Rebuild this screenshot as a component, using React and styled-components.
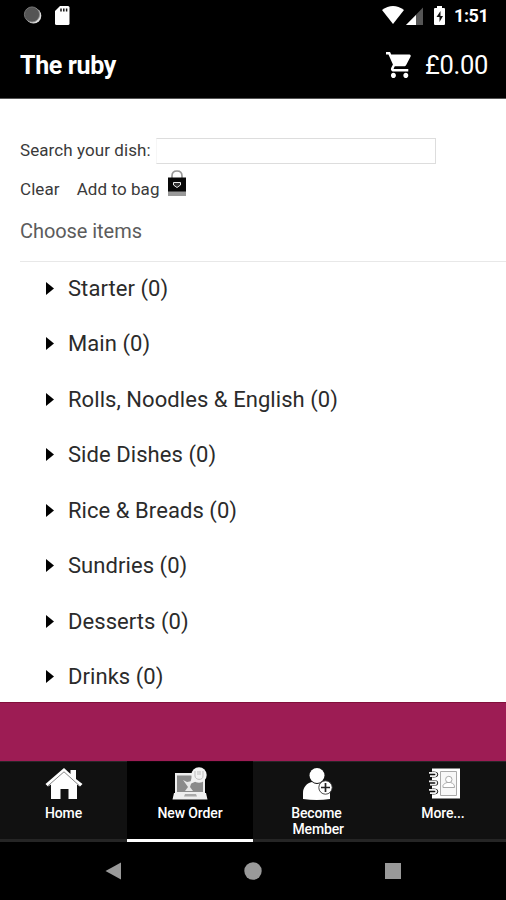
import React from "react";
import styled, { createGlobalStyle } from "styled-components";

const GlobalStyle = createGlobalStyle`
  * { box-sizing: border-box; }
  body { margin: 0; background: #fff; font-family: Roboto, "Liberation Sans", sans-serif; }
`;

const Screen = styled.div`
  width: 506px;
  height: 900px;
  display: flex;
  flex-direction: column;
  overflow: hidden;
  background: #fff;
`;

const StatusBar = styled.header`
  height: 32px;
  flex: none;
  display: flex;
  justify-content: space-between;
  background: #000;
  padding: 0 19px 0 22px;
  color: #fff;
`;

const StatusGroup = styled.div`
  display: flex;
  align-items: flex-start;
`;

const Clock = styled.span`
  font-size: 18px;
  font-weight: 700;
  line-height: 32px;
  letter-spacing: -0.45px;
  width: 33px;
  margin-left: 8px;
  white-space: nowrap;
`;

const AppBar = styled.div`
  height: 67px;
  flex: none;
  display: flex;
  align-items: center;
  justify-content: space-between;
  background: #000;
  color: #fff;
  padding: 0 18px 0 20px;
  border-bottom: 1px solid #555;
`;

const Title = styled.h1`
  margin: 0;
  font-size: 25px;
  font-weight: 700;
  letter-spacing: -0.35px;
`;

const Basket = styled.div`
  display: flex;
  align-items: center;
  gap: 13px;
  font-size: 25.5px;
  font-weight: 400;
  letter-spacing: -0.3px;
`;

const Content = styled.main`
  flex: 1;
  min-height: 0;
  overflow: hidden;
  padding: 39px 0 0 20px;
`;

const SearchRow = styled.label`
  display: flex;
  align-items: center;
  height: 26px;
  font-size: 17px;
  letter-spacing: 0.08px;
  color: #3a3a3a;
`;

const SearchLabel = styled.span`
  width: 136px;
  padding-bottom: 3px;
  white-space: nowrap;
`;

const SearchInput = styled.input`
  width: 280px;
  height: 26px;
  border: 1px solid #ddd;
  border-left-color: #f6f6f6;
  background: #fff;
  padding: 0 6px;
  outline: none;
`;

const Actions = styled.div`
  display: flex;
  align-items: flex-start;
  height: 46px;
  padding-top: 5px;
`;

const Action = styled.button`
  display: flex;
  padding: 0;
  border: 0;
  background: none;
  font: 17px/40px Roboto, "Liberation Sans", sans-serif;
  letter-spacing: 0.08px;
  color: #3a3a3a;
  margin-right: 17px;
  gap: 6px;
`;

const SectionTitle = styled.h2`
  margin: 0;
  height: 52px;
  border-bottom: 1px solid #e8e8e8;
  font-size: 20px;
  line-height: 42px;
  font-weight: 400;
  color: #5c5c5c;
  letter-spacing: -0.06px;
`;

const Categories = styled.ul`
  list-style: none;
  margin: 0;
  padding: 0 0 0 26px;
`;

const Category = styled.li`
  height: 55.43px;
  display: flex;
  align-items: flex-start;
  gap: 14px;
  font-size: 22px;
  line-height: 53px;
  color: #2b2b2b;
  letter-spacing: 0.06px;
  white-space: nowrap;
`;

const Marker = styled.svg`
  flex: none;
  width: 8px;
  height: 13px;
  margin-top: 20px;
`;

const Banner = styled.div`
  height: 59px;
  flex: none;
  background: #9d1c54;
  border-top: 1px solid #82103b;
`;

const Tabs = styled.nav`
  height: 81px;
  flex: none;
  display: grid;
  grid-template-columns: 127px 126px 127px 126px;
  background: #111;
`;

const Tab = styled.a`
  display: flex;
  flex-direction: column;
  align-items: center;
  padding-top: 5px;
  background: ${(p) => (p.$active ? "#000" : "#111")};
  border-top: 1px solid ${(p) => (p.$active ? "#10040a" : "#292528")};
  border-bottom: 3px solid ${(p) => (p.$active ? "#fff" : "#252525")};
  color: #fff;
  font-size: 14px;
  font-weight: 500;
  letter-spacing: -0.13px;
  line-height: 16px;
  text-align: center;
  white-space: pre;
`;

const TabIcon = styled.svg`
  width: 40px;
  height: 34px;
  flex: none;
  margin-bottom: 4px;
`;

const SystemNav = styled.footer`
  height: 58px;
  flex: none;
  background: #000;
  display: flex;
  justify-content: center;
  align-items: center;
`;

const SystemIcon = styled.svg`
  width: 140px;
  height: 20px;
  fill: #999;
`;

const HomeIcon = () => (
  <TabIcon viewBox="0 0 40 34">
    <path d="M1.500 17 20 1l6.500 6V3H32v9l6.500 5-2.500 2.500-3-2V32H24.500V22h-8v10H7V17.500L4 19.500z" fill="#fff" />
    <path d="m4 18.800 16-14 15.500 14" fill="none" stroke="#777" strokeWidth=".9" />
  </TabIcon>
);

const OrderIcon = () => (
  <TabIcon viewBox="0 0 40 34">
    <path d="M5 6h30v21H5z" fill="#eee" />
    <path d="M7 8.500h26V25H7z" fill="#8b8b8b" />
    <path d="m13 13 4 2 5-1-2 6 3 4h-8l3-4z" fill="#e8e8e8" />
    <path d="M4 26h32l1.500 6.500h-35z" fill="#eee" />
    <path d="M15 27h11l1 2.500H14z" fill="#aaa" />
    <path d="m27 14-7 3 2-8z" fill="#f2f2f2" />
    <circle cx="29" cy="8" r="7.700" fill="#f2f2f2" />
    <path d="M25 4v5c0 4 8 5 8 0V4m-5 0v4m2-4v4" fill="none" stroke="#bbb" strokeWidth="1" />
  </TabIcon>
);

const MemberIcon = () => (
  <TabIcon viewBox="0 0 40 34">
    <circle cx="20" cy="8.500" r="7.500" fill="#fff" />
    <path d="M6 32V26c0-6 4-10 9-11 3 2.500 7 2.500 10 0 5 1 8 5 8 11v6q-13 2-27 0z" fill="#fff" />
    <circle cx="28.500" cy="20.500" r="6.700" fill="#fff" stroke="#333" strokeWidth=".9" />
    <path d="M28.500 16v9m-4.500-4.500h9" stroke="#222" strokeWidth="1.700" />
  </TabIcon>
);

const ContactsIcon = () => (
  <TabIcon viewBox="0 0 40 34">
    <path d="M9 1.500h28v30H9z" fill="#fff" />
    <path d="M17.500 4.500h16v24h-16z" fill="#f8f8f8" stroke="#aaa" />
    <circle cx="25.800" cy="12.500" r="3.200" fill="#fff" stroke="#aaa" />
    <path d="M20 20.500v-2c1-2 2-2 4-3h3.500c3 1 4 2 4 5z" fill="#fff" stroke="#aaa" />
    {[7.5, 16, 24.5].map((y) => (
      <g key={y}>
        <ellipse cx="10.500" cy={y} rx="4.700" ry="3" fill="#111" />
        <path d={`M6 ${y - 1.6}h6q3 1.600 0 3.200H7`} fill="none" stroke="#eee" strokeWidth="1.800" />
      </g>
    ))}
  </TabIcon>
);

const categories = [
  "Starter (0)", "Main (0)", "Rolls, Noodles & English (0)", "Side Dishes (0)",
  "Rice & Breads (0)", "Sundries (0)", "Desserts (0)", "Drinks (0)",
];

const tabs = [
  { label: "Home", Icon: HomeIcon },
  { label: "New Order", Icon: OrderIcon, active: true },
  { label: "Become\n Member", Icon: MemberIcon },
  { label: "More...", Icon: ContactsIcon },
];

export default function App() {
  return (
    <Screen>
      <GlobalStyle />
      <StatusBar>
        <StatusGroup>
          <svg width="50" height="32" viewBox="0 0 50 32">
            <circle cx="11.500" cy="15.700" r="7.800" fill="#ddd" />
            <circle cx="10" cy="14.500" r="7.600" fill="#555" stroke="#888" strokeWidth=".8" />
            <path d="M38 6h8q1.500 0 1.500 1.500v16Q47.500 25 46 25H34.500Q33 25 33 23.500V11z" fill="#fff" />
            <path d="M39 8.500v3m2.800-3v3m2.800-3v3" stroke="#111" strokeWidth="1.500" />
          </svg>
        </StatusGroup>
        <StatusGroup>
          <svg width="64" height="32" viewBox="0 0 64 32">
            <path d="M0 10Q11 2 22 10L11 24z" fill="#fff" />
            <path d="M41 7.500V25H24z" fill="#555" />
            <path d="M34 15v10H24z" fill="#fff" />
            <path d="M55 6h5v2h2q1 0 1 1v15q0 1-1 1h-9q-1 0-1-1V9q0-1 1-1h2z" fill="#fff" />
            <path d="m58.500 11-4 6h3v5l3.500-6h-2.500z" fill="#111" />
          </svg>
          <Clock>1:51</Clock>
        </StatusGroup>
      </StatusBar>
      <AppBar>
        <Title>The ruby</Title>
        <Basket>
          <svg width="26" height="26" viewBox="1 2 21 20" preserveAspectRatio="none" fill="#fff">
            <path d="M7 18c-1.100 0-1.990.9-1.990 2S5.900 22 7 22s2-.9 2-2-.9-2-2-2zM1 2v2h2l3.600 7.590-1.350 2.450C4.520 15.370 5.480 17 7 17h12v-2H7.420a.25.25 0 0 1-.25-.25l.03-.12.9-1.630h7.450c.75 0 1.410-.41 1.750-1.030l3.580-6.490A1 1 0 0 0 20 4H5.210l-.94-2H1zm16 16c-1.100 0-1.990.9-1.990 2s.89 2 1.990 2 2-.9 2-2-.9-2-2-2z" />
          </svg>
          £0.00
        </Basket>
      </AppBar>
      <Content>
        <SearchRow>
          <SearchLabel>Search your dish:</SearchLabel>
          <SearchInput />
        </SearchRow>
        <Actions>
          <Action>Clear</Action>
          <Action>
            Add to bag
            <svg width="22" height="28" viewBox="0 0 22 28">
              <path d="M6 10V7q0-5 5-5t5 5v3" fill="none" stroke="#999" strokeWidth="1.700" />
              <path d="M2 8.500h18V27H2z" fill="#080808" />
              <path d="M2 22.500h18V27H2z" fill="#999" />
              <path d="M7.500 13.500h7V16L11 18.500 7.500 16z" fill="#333" stroke="#eee" />
            </svg>
          </Action>
        </Actions>
        <SectionTitle>Choose items</SectionTitle>
        <Categories>
          {categories.map((name) => (
            <Category key={name}>
              <Marker viewBox="0 0 8 13"><path d="M0 0 8 6.500 0 13z" fill="#000" /></Marker>
              {name}
            </Category>
          ))}
        </Categories>
      </Content>
      <Banner />
      <Tabs>
        {tabs.map(({ label, Icon, active }) => (
          <Tab key={label} $active={active}><Icon />{label}</Tab>
        ))}
      </Tabs>
      <SystemNav>
        <SystemIcon viewBox="0 0 140 20"><path d="M62.500 10 78 1.500v17z" /></SystemIcon>
        <SystemIcon viewBox="0 0 140 20"><circle cx="70" cy="10" r="8.700" /></SystemIcon>
        <SystemIcon viewBox="0 0 140 20"><path d="M62 2h16v16H62z" /></SystemIcon>
      </SystemNav>
    </Screen>
  );
}
